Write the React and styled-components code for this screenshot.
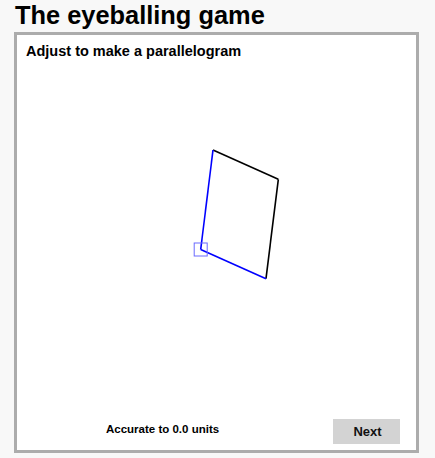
import React from "react";
import styled, { createGlobalStyle } from "styled-components";

const Global = createGlobalStyle`
  html, body { margin: 0; padding: 0; background: #f8f8f8; }
  body { font-family: "Liberation Sans", Arial, sans-serif; color: #000; }
`;

const Page = styled.div`
  padding: 0 0 0 14px;
  width: 435px;
  height: 458px;
  box-sizing: border-box;
  overflow: hidden;
`;

const Title = styled.h1`
  margin: 0 0 2px 1px;
  font-size: 25.4px;
  line-height: 30px;
  font-weight: bold;
`;

const Panel = styled.div`
  box-sizing: border-box;
  width: 405px;
  height: 421px;
  border: 3px solid #acacac;
  background: #fff;
  display: flex;
  flex-direction: column;
`;

const Prompt = styled.div`
  padding: 8px 9px 0;
  font-size: 14.5px;
  line-height: 17px;
  font-weight: bold;
`;

const Canvas = styled.svg`
  display: block;
  flex: 1;
  width: 399px;
`;

const Footer = styled.div`
  display: flex;
  justify-content: space-between;
  align-items: flex-start;
  padding: 0 16px 6px 89px;
`;

const Status = styled.div`
  margin-top: 2.5px;
  font-size: 11.5px;
  line-height: 14px;
  font-weight: bold;
`;

const NextButton = styled.button`
  width: 67px;
  height: 25px;
  border: none;
  background: #d3d3d3;
  font-family: "Liberation Sans", Arial, sans-serif;
  font-size: 13px;
  font-weight: bold;
  color: #111;
  padding: 0 0 0 2px;
`;

const pts = {
  top: [196, 90],
  right: [261.3, 119.3],
  bottom: [249, 218.7],
  left: [183.7, 189.5],
};

export default function App() {
  const { top, right, bottom, left } = pts;
  return (
    <>
      <Global />
      <Page>
        <Title>The eyeballing game</Title>
        <Panel>
          <Prompt>Adjust to make a parallelogram</Prompt>
          <Canvas viewBox="0 0 399 359" height="359">
            <line x1={top[0]} y1={top[1]} x2={right[0]} y2={right[1]} stroke="#000" strokeWidth="1.6" />
            <line x1={right[0]} y1={right[1]} x2={bottom[0]} y2={bottom[1]} stroke="#000" strokeWidth="1.6" />
            <line x1={top[0]} y1={top[1]} x2={left[0]} y2={left[1]} stroke="#0000ff" strokeWidth="1.6" />
            <line x1={left[0]} y1={left[1]} x2={bottom[0]} y2={bottom[1]} stroke="#0000ff" strokeWidth="1.6" />
            <rect x={left[0] - 6.5} y={left[1] - 6.5} width="13" height="13" fill="none" stroke="#6a6aff" strokeWidth="1" />
          </Canvas>
          <Footer>
            <Status>Accurate to 0.0 units</Status>
            <NextButton>Next</NextButton>
          </Footer>
        </Panel>
      </Page>
    </>
  );
}
